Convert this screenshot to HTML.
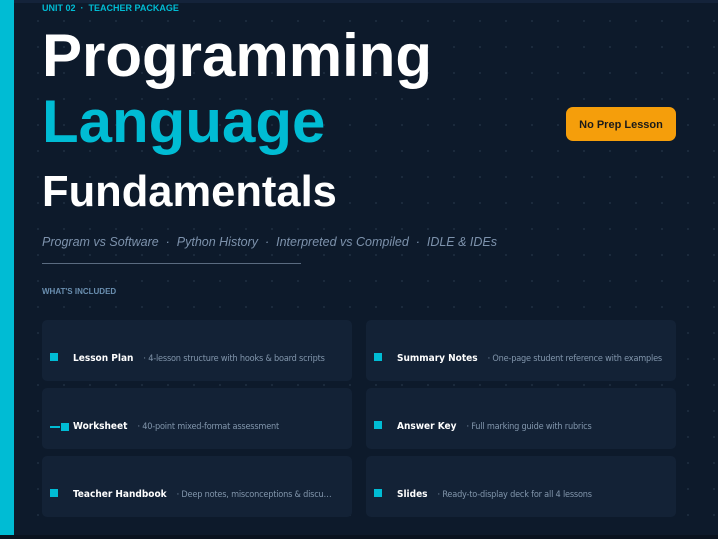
<!DOCTYPE html>
<html><head><style>
body{margin:0;width:718px;height:539px;overflow:hidden;background:#0d1a2b;font-family:"Liberation Sans",sans-serif;position:relative;
background-image:radial-gradient(circle,#1c2b3d 1px,transparent 1.2px);background-size:26px 26px;background-position:-1px 8px}
.bar{position:absolute;left:0;top:0;width:14px;height:539px;background:#00bcd4}
.top{position:absolute;left:14px;top:0;right:0;height:3px;background:#14233a}
.bot{position:absolute;left:0;bottom:0;right:0;height:4px;background:#0a131f}
.t{position:absolute;white-space:nowrap}
.card{position:absolute;width:310px;height:61px;background:#132236;border-radius:5px}
.sq{position:absolute;left:8px;top:33px;width:8px;height:8px;background:#00bcd4}
.ct{position:absolute;left:31px;top:33px;font-size:10px;font-weight:bold;color:#fff;white-space:nowrap;font-family:"DejaVu Sans Condensed","Liberation Sans",sans-serif}
.cd{font-weight:normal;color:#8296ac;font-size:9.1px;margin-left:10px;letter-spacing:-0.2px}
</style></head><body>
<div class="top"></div><div class="bar"></div><div class="bot"></div>
<div class="t" style="left:42px;top:3px;font-size:9px;font-weight:bold;color:#00bcd4">UNIT 02 &nbsp;·&nbsp; TEACHER PACKAGE</div>
<div class="t" style="left:42px;top:20px;font-size:60px;font-weight:bold;color:#fff;line-height:72px">Programming</div>
<div class="t" style="left:42px;top:86px;font-size:60px;font-weight:bold;color:#00bcd4;line-height:72px">Language</div>
<div class="t" style="left:42px;top:166px;font-size:43.5px;font-weight:bold;color:#fff;line-height:52px">Fundamentals</div>
<div class="t" style="left:42px;top:235px;font-size:12.5px;font-style:italic;color:#7d92ac">Program vs Software &nbsp;·&nbsp; Python History &nbsp;·&nbsp; Interpreted vs Compiled &nbsp;·&nbsp; IDLE &amp; IDEs</div>
<div style="position:absolute;left:42px;top:263px;width:259px;height:1px;background:#5a6b80"></div>
<div class="t" style="left:42px;top:287px;font-size:8px;font-weight:bold;color:#6a8fb0">WHAT'S INCLUDED</div>
<div class="t" style="left:566px;top:107px;width:110px;height:34px;background:#f59e0b;border-radius:7px;font-size:11px;font-weight:bold;color:#1a1a1a;text-align:center;line-height:37px">No Prep Lesson</div>

<div class="card" style="left:42px;top:320px"><div class="sq"></div><div class="ct">Lesson Plan<span class="cd">· 4-lesson structure with hooks &amp; board scripts</span></div></div>
<div class="card" style="left:42px;top:388px"><div style="position:absolute;left:8px;top:38px;width:10px;height:1.5px;background:#00bcd4"></div><div class="sq" style="left:19px;top:35px"></div><div class="ct">Worksheet<span class="cd">· 40-point mixed-format assessment</span></div></div>
<div class="card" style="left:42px;top:456px"><div class="sq"></div><div class="ct">Teacher Handbook<span class="cd">· Deep notes, misconceptions &amp; discu…</span></div></div>
<div class="card" style="left:366px;top:320px"><div class="sq"></div><div class="ct">Summary Notes<span class="cd">· One-page student reference with examples</span></div></div>
<div class="card" style="left:366px;top:388px"><div class="sq"></div><div class="ct">Answer Key<span class="cd">· Full marking guide with rubrics</span></div></div>
<div class="card" style="left:366px;top:456px"><div class="sq"></div><div class="ct">Slides<span class="cd">· Ready-to-display deck for all 4 lessons</span></div></div>
</body></html>
